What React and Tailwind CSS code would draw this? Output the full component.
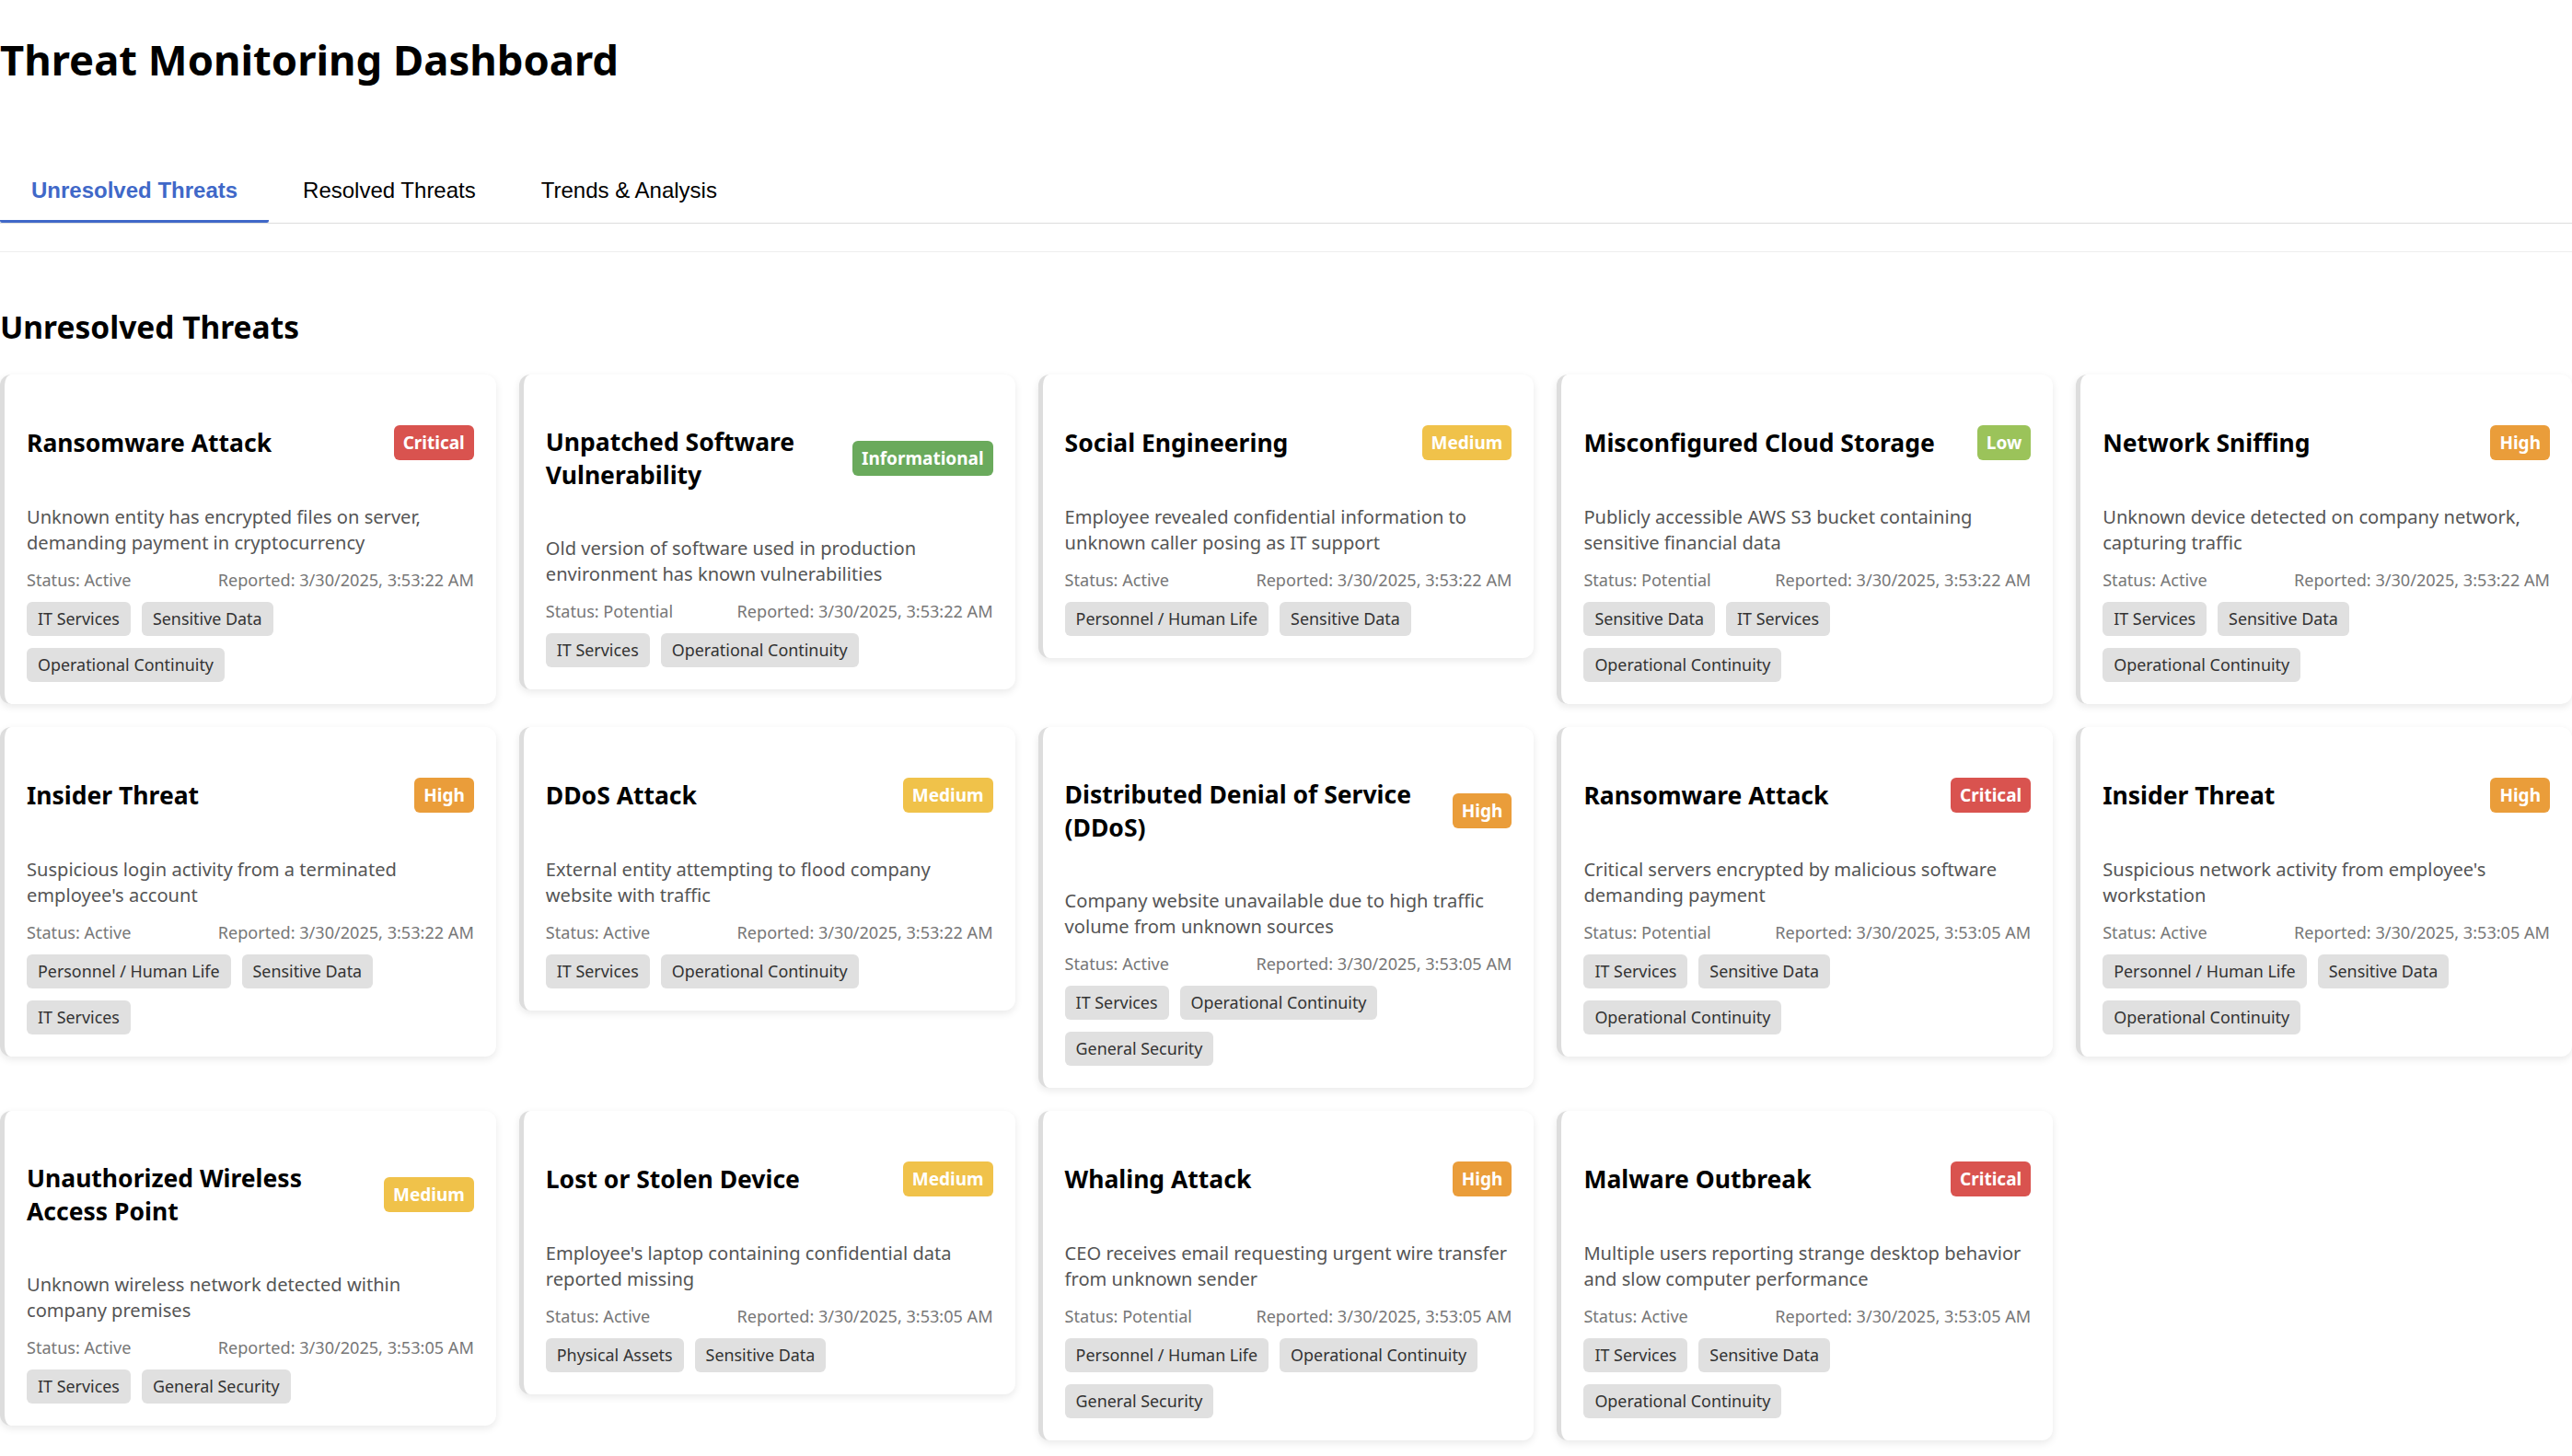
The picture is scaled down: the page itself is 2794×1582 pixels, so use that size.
import { useState } from "react";

const SEVERITY = {
  Critical: "bg-[#d9534f]",
  Informational: "bg-[#6aaa5c]",
  Medium: "bg-[#f0c24a]",
  Low: "bg-[#9bc35a]",
  High: "bg-[#ea9d3a]",
};

const threats = [
  {
    title: "Ransomware Attack",
    severity: "Critical",
    desc: "Unknown entity has encrypted files on server, demanding payment in cryptocurrency",
    status: "Active",
    time: "3:53:22 AM",
    tags: ["IT Services", "Sensitive Data", "Operational Continuity"],
  },
  {
    title: "Unpatched Software Vulnerability",
    severity: "Informational",
    desc: "Old version of software used in production environment has known vulnerabilities",
    status: "Potential",
    time: "3:53:22 AM",
    tags: ["IT Services", "Operational Continuity"],
  },
  {
    title: "Social Engineering",
    severity: "Medium",
    desc: "Employee revealed confidential information to unknown caller posing as IT support",
    status: "Active",
    time: "3:53:22 AM",
    tags: ["Personnel / Human Life", "Sensitive Data"],
  },
  {
    title: "Misconfigured Cloud Storage",
    severity: "Low",
    desc: "Publicly accessible AWS S3 bucket containing sensitive financial data",
    status: "Potential",
    time: "3:53:22 AM",
    tags: ["Sensitive Data", "IT Services", "Operational Continuity"],
  },
  {
    title: "Network Sniffing",
    severity: "High",
    desc: "Unknown device detected on company network, capturing traffic",
    status: "Active",
    time: "3:53:22 AM",
    tags: ["IT Services", "Sensitive Data", "Operational Continuity"],
  },
  {
    title: "Insider Threat",
    severity: "High",
    desc: "Suspicious login activity from a terminated employee's account",
    status: "Active",
    time: "3:53:22 AM",
    tags: ["Personnel / Human Life", "Sensitive Data", "IT Services"],
  },
  {
    title: "DDoS Attack",
    severity: "Medium",
    desc: "External entity attempting to flood company website with traffic",
    status: "Active",
    time: "3:53:22 AM",
    tags: ["IT Services", "Operational Continuity"],
  },
  {
    title: "Distributed Denial of Service (DDoS)",
    severity: "High",
    desc: "Company website unavailable due to high traffic volume from unknown sources",
    status: "Active",
    time: "3:53:05 AM",
    tags: ["IT Services", "Operational Continuity", "General Security"],
  },
  {
    title: "Ransomware Attack",
    severity: "Critical",
    desc: "Critical servers encrypted by malicious software demanding payment",
    status: "Potential",
    time: "3:53:05 AM",
    tags: ["IT Services", "Sensitive Data", "Operational Continuity"],
  },
  {
    title: "Insider Threat",
    severity: "High",
    desc: "Suspicious network activity from employee's workstation",
    status: "Active",
    time: "3:53:05 AM",
    tags: ["Personnel / Human Life", "Sensitive Data", "Operational Continuity"],
  },
  {
    title: "Unauthorized Wireless Access Point",
    severity: "Medium",
    desc: "Unknown wireless network detected within company premises",
    status: "Active",
    time: "3:53:05 AM",
    tags: ["IT Services", "General Security"],
  },
  {
    title: "Lost or Stolen Device",
    severity: "Medium",
    desc: "Employee's laptop containing confidential data reported missing",
    status: "Active",
    time: "3:53:05 AM",
    tags: ["Physical Assets", "Sensitive Data"],
  },
  {
    title: "Whaling Attack",
    severity: "High",
    desc: "CEO receives email requesting urgent wire transfer from unknown sender",
    status: "Potential",
    time: "3:53:05 AM",
    tags: ["Personnel / Human Life", "Operational Continuity", "General Security"],
  },
  {
    title: "Malware Outbreak",
    severity: "Critical",
    desc: "Multiple users reporting strange desktop behavior and slow computer performance",
    status: "Active",
    time: "3:53:05 AM",
    tags: ["IT Services", "Sensitive Data", "Operational Continuity"],
  },
];

const tabs = ["Unresolved Threats", "Resolved Threats", "Trends & Analysis"];

function ThreatCard({ threat }) {
  return (
    <div className="bg-white rounded-[12px] border-l-[5px] border-l-[#dddddd] shadow-[0_3px_9px_rgba(0,0,0,0.09)] px-[24px] pt-[24px] pb-[24px]">
      <div className="flex items-center gap-[20px] pt-[31px]">
        <h3 className="text-[26.5px] leading-[36px] font-bold text-black">{threat.title}</h3>
        <span
          className={`ml-auto shrink-0 h-[38px] px-[10px] rounded-[6px] flex items-center text-white text-[19px] font-bold ${SEVERITY[threat.severity]}`}
        >
          {threat.severity}
        </span>
      </div>
      <p className="mt-[48px] text-[20.1px] leading-[28px] text-[#555555]">{threat.desc}</p>
      <div className="mt-[13px] flex justify-between text-[18.1px] leading-[26px] text-[#777777]">
        <span>Status: {threat.status}</span>
        <span>Reported: 3/30/2025, {threat.time}</span>
      </div>
      <div className="mt-[11px] flex flex-wrap gap-x-[12px] gap-y-[13px]">
        {threat.tags.map((tag, i) => (
          <span
            key={i}
            className="h-[37px] px-[12px] flex items-center rounded-[6px] bg-[#e0e0e0] text-[17.9px] text-[#333333]"
          >
            {tag}
          </span>
        ))}
      </div>
    </div>
  );
}

export default function App() {
  const [active, setActive] = useState(0);

  return (
    <div className="min-h-screen bg-white font-['Segoe_UI','Noto_Sans',sans-serif] text-black overflow-hidden">
      <h1 className="pt-[32px] text-[45.4px] leading-[64px] font-bold">Threat Monitoring Dashboard</h1>

      <div className="mt-[79px] flex gap-[3px] border-b border-[#dddddd] font-['Liberation_Sans',Arial,sans-serif]">
        {tabs.map((tab, i) => (
          <button
            key={tab}
            onClick={() => setActive(i)}
            className={`px-[34px] pt-[18px] pb-[18px] text-[24px] leading-[28px] border-b-[3px] rounded-b-[2px] ${
              active === i
                ? "border-[#4068c8] text-[#4068c8] font-semibold"
                : "border-transparent text-black"
            }`}
          >
            {tab}
          </button>
        ))}
      </div>

      <div className="mt-[30px] border-t border-[#eeeeee]">
        <h2 className="mt-[57px] text-[33.5px] leading-[48px] font-bold">Unresolved Threats</h2>
        <div className="mt-[28px] grid grid-cols-5 gap-x-[25px] gap-y-[25px] items-start">
          {threats.map((t, i) => (
            <ThreatCard key={i} threat={t} />
          ))}
        </div>
      </div>
    </div>
  );
}
